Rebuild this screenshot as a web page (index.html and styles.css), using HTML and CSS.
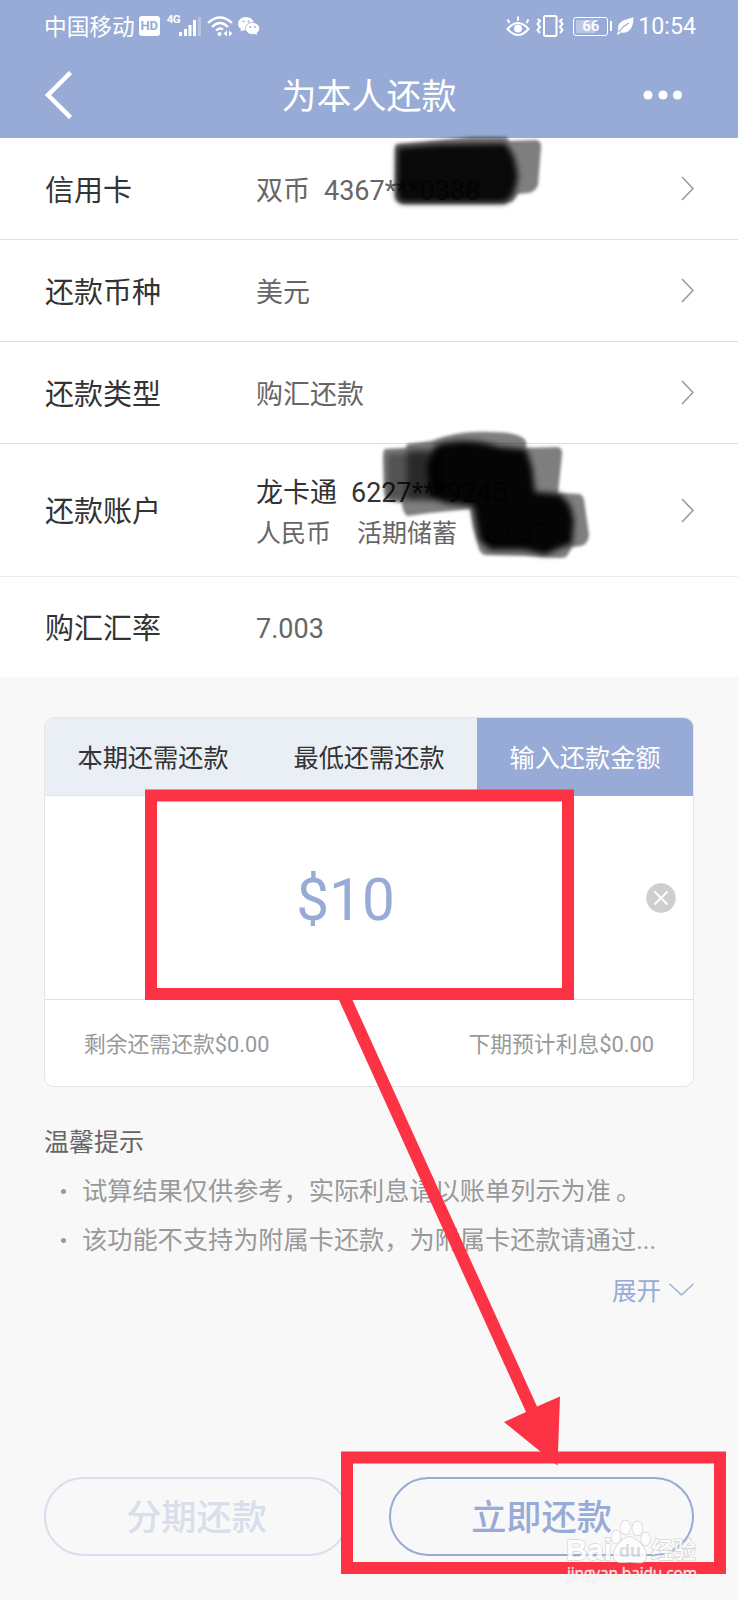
FILE: index.html
```html
<!DOCTYPE html>
<html lang="zh-CN">
<head>
<meta charset="utf-8">
<title>为本人还款</title>
<link rel="stylesheet" href="styles.css">
</head>
<body>
<div class="screen">
  <header class="header">
    <div class="status">
      <div class="status-left">
        <span class="carrier">中国移动</span>
        <span class="hd">HD</span>
        <span class="net">4G</span>
        <svg class="signal" width="23" height="20" viewBox="0 0 23 20" fill="#fff"><rect x="0" y="16" width="3" height="4"/><rect x="5" y="13" width="3" height="7"/><rect x="9.500" y="9" width="3" height="11"/><rect x="14" y="4" width="3" height="16"/><rect x="19" y="1" width="3" height="19" opacity=".3"/></svg>
        <svg class="wifi" width="26" height="22" viewBox="0 0 26 22" fill="none" stroke="#fff" stroke-width="2.300"><path d="M1 8Q13-3 25 8M5 12Q13 4 21 12M9 15.500Q13 12 16 14.500"/><circle cx="12.500" cy="19" r="2" fill="#fff" stroke="none"/><path d="M20 15.500v6l-3.500-3zM22 15.500v6l3.500-3z" fill="#fff" stroke="none"/></svg>
        <svg class="wechat" width="22" height="19" viewBox="0 0 22 19"><path d="M8 0C3.500 0 0 3 0 6.800c0 2.200 1.200 4 3 5.200L2.500 14.500 5.300 13.200 8 13.600C12.500 13.600 16 10.600 16 6.800S12.500 0 8 0" fill="#fff"/><path d="M14.500 5.500c-4 0-7 2.700-7 6s3 6 7 6l2-.3 3 1.500-.6-2.500c1.800-1.200 2.800-2.800 2.800-4.700 0-3.300-3.200-6-7.200-6" fill="#fff" stroke="#97abd6" stroke-width=".8"/><g fill="#97abd6"><circle cx="5.500" cy="4.500" r="1"/><circle cx="10.500" cy="4.500" r="1"/><circle cx="12.300" cy="10" r=".9"/><circle cx="17" cy="10" r=".9"/></g></svg>
      </div>
      <div class="status-right">
        <svg class="eye" width="24" height="21" viewBox="0 0 24 21" fill="none" stroke="#fff" stroke-width="2"><path d="M1.500 13Q12 1 22.500 13 12 25 1.500 13zM3.500 7 1.500 3.500M12 5V.5M20.500 7l2-3.500"/><circle cx="12" cy="12.500" r="4" fill="#fff" stroke="none"/></svg>
        <svg class="vibrate" width="28" height="22" viewBox="0 0 28 22" fill="none" stroke="#fff" stroke-width="2"><rect x="8" y="1" width="12.500" height="20" rx="1.500"/><path d="M1.500 4l2.500 2-2.500 3 2.500 3-2.500 3 2.500 3M26.500 4 24 6l2.500 3L24 12l2.500 3L24 18"/></svg>
        <span class="battery"><span class="battery-level">66</span></span>
        <svg class="leaf" width="17" height="18" viewBox="0 0 17 18"><path d="M16.500 0C15 1.500 6 2 2.500 6.500 0 10 1.500 13.500 1.500 14L0 17l1 1 2.500-2.500c8 1.500 13-3.500 13-15.500" fill="#fff"/><path d="M2 15Q6 9 12 6" fill="none" stroke="#97abd6" stroke-width="1.200"/></svg>
        <span class="clock">10:54</span>
      </div>
    </div>
    <div class="nav">
      <svg width="28" height="48" viewBox="0 0 28 48" fill="none" stroke="#fff" stroke-width="4.500"><path d="M26.500 1.500 4 24 26.500 46.500"/></svg>
      <h1 class="title">为本人还款</h1>
      <svg width="40" height="10" viewBox="0 0 40 10" fill="#fff"><circle cx="5" cy="5" r="4.600"/><circle cx="20" cy="5" r="4.600"/><circle cx="34.500" cy="5" r="4.600"/></svg>
    </div>
  </header>

  <main>
    <section class="rows">
      <div class="row"><span class="label">信用卡</span><span class="value">双币<span class="number">4367***0388</span></span><svg class="chevron" viewBox="0 0 13 25"><path d="M1 1 12 12.500 1 24"/></svg></div>
      <div class="row"><span class="label">还款币种</span><span class="value">美元</span><svg class="chevron" viewBox="0 0 13 25"><path d="M1 1 12 12.500 1 24"/></svg></div>
      <div class="row"><span class="label">还款类型</span><span class="value">购汇还款</span><svg class="chevron" viewBox="0 0 13 25"><path d="M1 1 12 12.500 1 24"/></svg></div>
      <div class="row row-account"><span class="label">还款账户</span><span class="value account"><span class="account-name">龙卡通<span class="number">6227***9245</span></span><span class="account-type">人民币<span class="kind">活期储蓄</span><span class="balance">83.37</span></span></span><svg class="chevron" viewBox="0 0 13 25"><path d="M1 1 12 12.500 1 24"/></svg></div>
      <div class="row row-rate"><span class="label">购汇汇率</span><span class="value">7.003</span></div>
    </section>

    <section class="card">
      <div class="tabs"><div class="tab">本期还需还款</div><div class="tab">最低还需还款</div><div class="tab active">输入还款金额</div></div>
      <div class="amount">
        <span class="sum">$10</span>
        <svg class="clear" width="30" height="30" viewBox="0 0 30 30"><circle cx="15" cy="15" r="14.700" fill="#cecece"/><path d="M8.500 8.500l13 13m0-13-13 13" stroke="#fff" stroke-width="2"/></svg>
      </div>
      <div class="summary"><span>剩余还需还款$0.00</span><span>下期预计利息$0.00</span></div>
    </section>

    <section class="tips">
      <h2 class="tips-title">温馨提示</h2>
      <ul class="tips-list">
        <li>试算结果仅供参考，实际利息请以账单列示为准<span class="stop">。</span></li>
        <li>该功能不支持为附属卡还款，为附属卡还款请通过...</li>
      </ul>
      <div class="expand">展开<svg width="25" height="13" viewBox="0 0 25 13" fill="none" stroke="#9fb0d5" stroke-width="1.500"><path d="M.5.800 12.500 12 24.500.8"/></svg></div>
    </section>
  </main>

  <footer class="actions"><div class="button disabled">分期还款</div><div class="button">立即还款</div></footer>

  <svg class="marks" width="738" height="1600" viewBox="0 0 738 1600">
    <defs>
      <filter id="soft" x="-10%" y="-10%" width="120%" height="120%"><feGaussianBlur stdDeviation="1.500"/></filter>
      <filter id="softer" x="-10%" y="-20%" width="120%" height="140%"><feGaussianBlur stdDeviation="3"/></filter>
    </defs>
    <g filter="url(#soft)" fill="#000">
      <path d="M397 144 420 142 470 137H504Q508 137 509 141L536 140Q542 141 541 148L538 185Q535 192 528 193L518 194 513 201 505 204H402Q395 202 395 197V149Q395 144 397 144" opacity=".5"/>
      <path d="M385 449 406 448 407 444 431 441Q460 430 490 432 520 432 526 441L526 448 558 447Q563 449 562 455L558 493 579 494Q583 495 584 500L589 535Q588 545 580 546L572 547 567 556Q565 558 558 558L525 556 485 555Q479 553 478 545L473 527 470 509 430 513 407 516Q402 511 402 503L387 500Q384 497 384 490L383 457Q383 451 385 449" opacity=".5"/>
    </g>
    <g filter="url(#softer)" fill="#000">
      <path d="M397 147 440 144 505 143Q512 151 515 160L518 176Q516 190 511 198L504 203H402Q396 200 396 194z" opacity=".93"/>
      <path d="M436 445Q468 436 500 447L526 449 532 467 535 492 560 494 570 505 574 520 572 544 560 548 545 555 525 550 490 550 479 540 473 506 445 503 430 497 427 465z" opacity=".96"/>
      <path d="M407 449H440V500H407z" opacity=".5"/>
      <path d="M387 453H438V500H387z" opacity=".35"/>
    </g>
    <g fill="none" stroke="#fc3344" stroke-width="12"><rect x="151" y="795.500" width="417" height="198.500"/><rect x="347" y="1457.500" width="373" height="110.500"/></g>
    <path d="M339 1000H352.500L537 1406.500 560 1396.500 557.500 1465.500 504 1422 526 1412z" fill="#fc3344"/>
    <g class="watermark">
      <text x="566" y="1560" class="wm-logo" textLength="46" lengthAdjust="spacingAndGlyphs">Bai</text>
      <text x="651" y="1558" class="wm-cn">经验</text>
      <text x="567" y="1579" class="wm-url" textLength="130">jingyan.baidu.com</text>
      <path d="M629 1537C621 1538 612 1550 614 1558c2 6 9 4 16 4s14 3 16-4c2-8-8-20-17-21"/><ellipse cx="616" cy="1537" rx="4.500" ry="6.500"/><ellipse cx="625.500" cy="1527.500" rx="5" ry="7"/><ellipse cx="637.500" cy="1528.500" rx="5" ry="7"/><ellipse cx="645.500" cy="1539" rx="4.500" ry="6.500"/>
      <text x="619" y="1557" class="wm-du">du</text>
    </g>
  </svg>
</div>
</body>
</html>
```
FILE: styles.css
```css
* { box-sizing: border-box; }
body { margin: 0; font-family: Roboto, "Noto Sans CJK SC", sans-serif; }
.screen { position: relative; width: 738px; height: 1600px; overflow: hidden; background: #f8f8f8; }

.header { height: 138px; background: #97abd6; color: #fff; }
.status { height: 52px; padding: 0 42px 0 44px; display: flex; justify-content: space-between; align-items: center; }
.status-left, .status-right { display: flex; align-items: center; white-space: nowrap; }
.carrier { padding-top: 3px; font-size: 22.7px; line-height: 30px; }
.hd { width: 21px; height: 20px; margin-left: 4px; border-radius: 3px; background: #fff; color: #97abd6; font-size: 13px; font-weight: 700; line-height: 20px; text-align: center; }
.net { width: 12px; margin: -14px 0 0 7px; font-size: 11.5px; font-weight: 700; line-height: 12px; letter-spacing: -0.6px; }
.wifi { margin-left: 5px; }
.wechat { margin-left: 5px; }
.eye { margin-right: 6px; }
.vibrate { margin-right: 9px; }
.battery { position: relative; width: 35px; height: 19px; padding: 2px; border: 1.500px solid #fff; border-radius: 3px; margin-right: 9px; }
.battery::after { content: ""; position: absolute; right: -5px; top: 3px; width: 2px; height: 10px; background: #fff; }
.battery-level { display: block; height: 100%; font-size: 15px; font-weight: 500; line-height: 13px; text-align: center; background: linear-gradient(90deg, rgba(255,255,255,.35) 65%, transparent 65%); }
.leaf { margin-right: 4px; }
.clock { font-size: 23.200px; line-height: 28px; }
.nav { height: 86px; padding: 0 55px 0 44px; display: grid; grid-template-columns: 40px 1fr 40px; align-items: center; }
.nav svg { margin-top: -1px; }
.title { margin: 5px 0 0 11px; font-size: 35px; font-weight: 400; line-height: 44px; text-align: center; }

.rows { background: #fff; }
.row { height: 102px; padding: 4px 44px 0 45px; border-bottom: 1px solid #dedede; display: grid; grid-template-columns: 211px 1fr 13px; align-items: center; }
.row-account { height: 133px; border-color: #ececec; }
.row-rate { height: 100px; border: 0; padding-top: 4px; }
.label { font-size: 29px; line-height: 36px; color: #333; }
.value { font-size: 27px; line-height: 34px; color: #666; white-space: nowrap; }
.number { margin-left: 14px; }
.account { display: flex; flex-direction: column; gap: 8px; padding-top: 1px; }
.account-name { color: #333; }
.account-type { font-size: 25px; line-height: 32px; }
.kind { margin-left: 26px; }
.balance { margin-left: 27px; }
.chevron { width: 13px; height: 25px; margin-top: -4px; fill: none; stroke: #999; stroke-width: 1.600; }

.card { margin: 40px 44px 0 44px; height: 370px; border: 1px solid #e3e5e8; border-radius: 10px; overflow: hidden; background: #fff; }
.tabs { height: 78px; display: grid; grid-template-columns: repeat(3, 1fr); background: #eaeff6; border-bottom: 1px solid #dfe4ec; }
.tab { height: 78px; font-size: 25.200px; line-height: 81px; text-align: center; color: #333; }
.tab.active { background: #97abd6; color: #fff; }
.amount { height: 204px; border-bottom: 1px solid #e0e0e0; padding: 0 17px 0 0; display: flex; align-items: center; }
.sum { flex: 1; padding: 5px 0 0 0; font-size: 58.500px; line-height: 66px; text-align: center; color: #97abd6; }
.clear { display: block; }
.summary { height: 86px; padding: 4px 39px 0; display: flex; justify-content: space-between; align-items: center; font-size: 21.800px; line-height: 28px; color: #999; }

.tips { padding: 0 44px 0 44px; }
.tips-title { margin: 39px 0 0; font-size: 25px; line-height: 34px; font-weight: 400; color: #666; }
.tips-list { margin: 7px 0 0; padding: 0; list-style: none; font-size: 25.200px; line-height: 49px; color: #999; white-space: nowrap; }
.tips-list li { display: flex; align-items: center; padding-left: 17px; }
.tips-list li::before { content: ""; width: 5px; height: 5px; margin-right: 16px; border-radius: 50%; background: #999; }
.stop { margin-left: 5px; }
.expand { margin-top: 11px; display: flex; justify-content: flex-end; align-items: center; gap: 8px; font-size: 24.500px; line-height: 32px; color: #97abd6; }
.expand svg { margin-top: -5px; }

.actions { position: absolute; left: 44px; right: 44px; bottom: 44px; display: flex; justify-content: space-between; }
.button { width: 305px; height: 79px; border: 2px solid #97abd6; border-radius: 40px; font-size: 35.200px; font-weight: 500; line-height: 79px; text-align: center; color: #97abd6; }
.button.disabled { border-color: #d8deec; color: #d8deec; }

.marks { position: absolute; left: 0; top: 0; pointer-events: none; }
.watermark { fill: #fff; stroke: #d0d0d0; stroke-width: 1.500px; paint-order: stroke; opacity: .85; }
.wm-logo { font: 700 29px "Liberation Sans", sans-serif; }
.wm-du { font: 700 18px "Liberation Sans", sans-serif; fill: #d3d6dc; stroke: none; }
.wm-cn { font: 500 22.500px "Noto Sans CJK SC", sans-serif; }
.wm-url { font: 400 15.500px "Open Sans", sans-serif; stroke-width: .6px; }
```
